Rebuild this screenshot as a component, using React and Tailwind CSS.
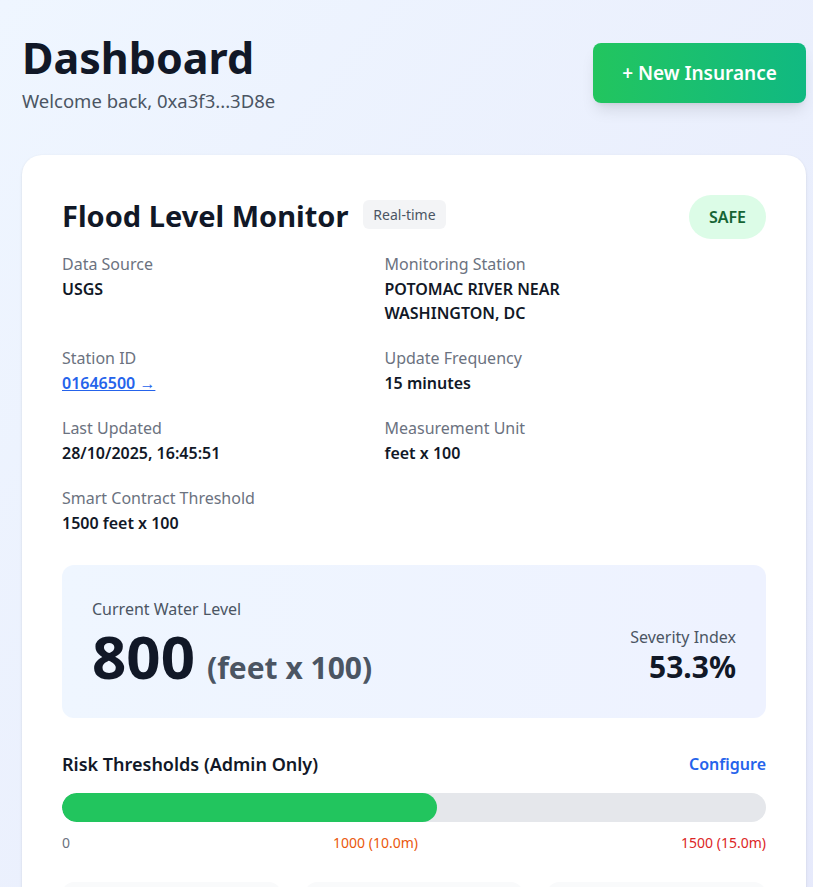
import React from "react";

const fields = [
  { label: "Data Source", value: "USGS" },
  { label: "Monitoring Station", value: "POTOMAC RIVER NEAR WASHINGTON, DC", narrow: true },
  { label: "Station ID", value: "01646500 →", link: true },
  { label: "Update Frequency", value: "15 minutes" },
  { label: "Last Updated", value: "28/10/2025, 16:45:51" },
  { label: "Measurement Unit", value: "feet x 100" },
  { label: "Smart Contract Threshold", value: "1500 feet x 100" },
];

export default function App() {
  const level = 800;
  const threshold = 1500;
  const pct = (level / threshold) * 100;

  return (
    <div
      className="min-h-screen overflow-hidden bg-gradient-to-br from-[#eff6ff] to-[#e6e9fb] pl-[22px] pr-[7px] pt-[29px]"
      style={{ fontFamily: '"Noto Sans", "Open Sans", sans-serif' }}
    >
      <div className="flex items-start justify-between">
        <div>
          <h1 className="text-[43px] font-bold leading-[58px] text-[#111827]">Dashboard</h1>
          <p className="text-[18.5px] leading-7 text-[#4b5563]">Welcome back, 0xa3f3...3D8e</p>
        </div>
        <button
          type="button"
          className="mt-[14px] h-[60px] w-[213px] rounded-lg bg-gradient-to-r from-[#22c55e] to-[#10b981] text-[19px] font-semibold text-white shadow-lg"
        >
          + New Insurance
        </button>
      </div>

      <div className="mt-10 rounded-[20px] bg-white p-10 shadow-sm">
        <div className="flex items-start justify-between">
          <div className="flex-1">
            <div className="mb-[15px] flex items-start gap-[15px]">
              <h2 className="text-[29px] font-bold leading-[42px] text-[#111827]">Flood Level Monitor</h2>
              <span className="mt-[5px] rounded-md bg-[#f3f4f6] px-2.5 py-[4.5px] text-sm text-[#4b5563]">Real-time</span>
            </div>
            <div className="grid grid-cols-2 gap-x-[18px] gap-y-[21px]">
              {fields.map((f) => (
                <div key={f.label}>
                  <div className="text-base text-[#6b7280]">{f.label}</div>
                  {f.link ? (
                    <a href="#" className="mt-px block font-semibold text-[#2563eb] underline">
                      {f.value}
                    </a>
                  ) : (
                    <div className={`mt-px font-semibold text-[#111827] ${f.narrow ? "max-w-[200px]" : ""}`}>
                      {f.value}
                    </div>
                  )}
                </div>
              ))}
            </div>
          </div>
          <span className="rounded-full bg-[#dcfce7] px-5 py-2.5 text-base font-semibold text-[#166534]">
            SAFE
          </span>
        </div>

        <div className="mt-[30px] flex items-end justify-between rounded-xl bg-gradient-to-r from-[#eff6ff] to-[#eef2ff] px-[30px] pb-[31px] pt-8">
          <div>
            <div className="text-base text-[#4b5563]">Current Water Level</div>
            <div className="mt-1 flex items-baseline gap-3">
              <span className="text-6xl font-bold leading-[62px] text-[#111827]">{level}</span>
              <span className="text-3xl font-bold text-[#4b5563]">(feet x 100)</span>
            </div>
          </div>
          <div className="pb-[2px] text-right">
            <div className="text-base text-[#4b5563]">Severity Index</div>
            <div className="text-3xl font-bold text-[#111827]">{pct.toFixed(1)}%</div>
          </div>
        </div>

        <div className="mt-8">
          <div className="mb-[15px] flex items-center justify-between">
            <h3 className="text-lg font-semibold text-[#111827]">Risk Thresholds (Admin Only)</h3>
            <button type="button" className="text-base font-semibold text-[#2563eb]">
              Configure
            </button>
          </div>
          <div className="h-[29px] w-full overflow-hidden rounded-full bg-[#e5e7eb]">
            <div className="h-full rounded-full bg-[#22c55e]" style={{ width: `${pct}%` }} />
          </div>
          <div className="mt-[11px] flex justify-between text-sm">
            <span className="text-[#6b7280]">0</span>
            <span className="text-[#ea580c]">1000 (10.0m)</span>
            <span className="text-[#dc2626]">1500 (15.0m)</span>
          </div>
        </div>

        <div className="mt-[29px] grid grid-cols-3 gap-6">
          {[0, 1, 2].map((i) => (
            <div key={i} className="h-28 rounded-xl bg-[#f9fafb]" />
          ))}
        </div>
      </div>
    </div>
  );
}
